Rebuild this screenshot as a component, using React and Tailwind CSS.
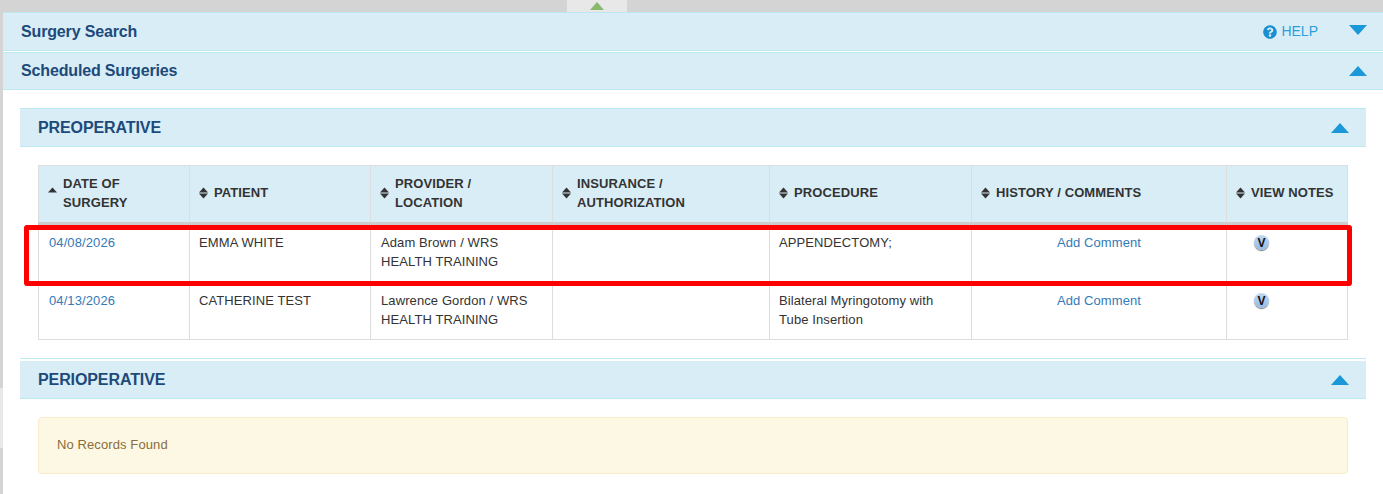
import { FaQuestionCircle } from "react-icons/fa";

function Caret({ down, className }) {
  return (
    <svg width="18" height="10" viewBox="0 0 18 10" className={className}>
      <path d={down ? "M0 0H18L9 10Z" : "M9 0L18 10H0Z"} fill="#1a98d8" />
    </svg>
  );
}

function SortIcon({ asc }) {
  return (
    <svg width="9" height="12" viewBox="0 0 9 12" className="shrink-0">
      <path d="M4.5 0.5L9 5.5H0Z" fill="#333" />
      {!asc && <path d="M4.5 11.5L0 6.5H9Z" fill="#333" />}
    </svg>
  );
}

function Bar({ title, children, short }) {
  return (
    <div className={`flex items-center justify-between bg-[#d9edf7] border-y border-[#bce8f1] pl-[18px] pr-[16px] ${short ? "h-[38px]" : "h-[39px]"}`}>
      <span className="text-[16px] font-bold text-[#1c4a7a] tracking-[-0.15px]">{title}</span>
      {children}
    </div>
  );
}

function SubBar({ title, short }) {
  return (
    <div className={`flex items-center justify-between bg-[#d9edf7] border-b border-[#bce8f1] pl-[18px] pr-[17px] ${short ? "h-[38px]" : "h-[39px] border-t"}`}>
      <span className="text-[16px] font-bold text-[#1c4a7a] tracking-[-0.1px]">{title}</span>
      <Caret />
    </div>
  );
}

const columns = [
  { label: "DATE OF SURGERY", width: "w-[151px]", asc: true },
  { label: "PATIENT", width: "w-[181px]" },
  { label: "PROVIDER / LOCATION", width: "w-[182px]", labelWidth: "max-w-[100px]" },
  { label: "INSURANCE / AUTHORIZATION", width: "w-[217px]" },
  { label: "PROCEDURE", width: "w-[202px]" },
  { label: "HISTORY / COMMENTS", width: "w-[255px]" },
  { label: "VIEW NOTES", width: "w-[121px]" },
];

const rows = [
  {
    date: "04/08/2026",
    patient: "EMMA WHITE",
    provider: "Adam Brown / WRS HEALTH TRAINING",
    procedure: "APPENDECTOMY;",
    height: "h-[59px]",
  },
  {
    date: "04/13/2026",
    patient: "CATHERINE TEST",
    provider: "Lawrence Gordon / WRS HEALTH TRAINING",
    procedure: "Bilateral Myringotomy with Tube Insertion",
    height: "h-[57px]",
  },
];

function VBadge() {
  return (
    <span className="flex items-center justify-center w-[15px] h-[15px] rounded-full bg-gradient-to-b from-[#c3d9f0] to-[#94bae4] shadow-[0_1px_1px_#777] text-[12px] font-bold leading-none text-[#111]">
      V
    </span>
  );
}

export default function App() {
  return (
    <div className="relative h-[494px] overflow-hidden bg-[#d4d4d4] pt-[12px] pl-[3px] font-['Liberation_Sans',Arial,sans-serif]">
      <div className="absolute top-0 left-[567px] w-[60px] h-[12px] bg-[#e8e8e8] flex justify-center items-start pt-[2px]">
        <svg width="14" height="8" viewBox="0 0 14 8">
          <path d="M7 0L14 8H0Z" fill="#8ab86c" />
        </svg>
      </div>
      <div className="absolute left-0 top-[388px] w-[3px] h-[60px] bg-[#e8e8e8]" />

      <div className="bg-white h-full">
        <Bar title="Surgery Search">
          <div className="flex items-center">
            <FaQuestionCircle className="text-[#1a8fd0] text-[14px] mr-[4px]" />
            <span className="text-[14px] text-[#2a9fdb] mr-[31px]">HELP</span>
            <Caret down className="mb-[3px]" />
          </div>
        </Bar>
        <div className="mt-[1px]">
          <Bar title="Scheduled Surgeries" short>
            <Caret />
          </Bar>
        </div>

        <div className="mx-[17px] mt-[18px]">
          <SubBar title="PREOPERATIVE" />
          <div className="mx-[18px] mt-[18px]">
            <table className="table-fixed border-collapse w-[1310px] text-[13px] leading-[19px] tracking-[0.1px] text-[#333]">
              <thead>
                <tr className="h-[58px] bg-[#d9edf7]">
                  {columns.map((col) => (
                    <th
                      key={col.label}
                      className={`${col.width} border border-[#ddd] border-b-[3px] border-b-[#ccc] pl-[9px] pr-[4px] pb-[3px] text-left font-bold text-[13px] text-[#333]`}
                    >
                      <div className="flex items-center gap-[6px]">
                        <SortIcon asc={col.asc} />
                        <span className={col.labelWidth}>{col.label}</span>
                      </div>
                    </th>
                  ))}
                </tr>
              </thead>
              <tbody>
                {rows.map((row) => (
                  <tr key={row.date} className={`${row.height} align-top`}>
                    <td className="border border-[#ddd] px-[10px] pt-[8px]">
                      <a className="text-[#337ab7]">{row.date}</a>
                    </td>
                    <td className="border border-[#ddd] pl-[9px] pr-[10px] pt-[8px]">{row.patient}</td>
                    <td className="border border-[#ddd] px-[10px] pt-[8px]">{row.provider}</td>
                    <td className="border border-[#ddd] px-[10px] pt-[8px]"></td>
                    <td className="border border-[#ddd] pl-[9px] pr-[10px] pt-[8px]">{row.procedure}</td>
                    <td className="border border-[#ddd] px-[10px] pt-[8px] text-center">
                      <a className="text-[#337ab7]">Add Comment</a>
                    </td>
                    <td className="border border-[#ddd] pl-[27px] pt-[10px]">
                      <VBadge />
                    </td>
                  </tr>
                ))}
              </tbody>
            </table>
          </div>

          <div className="mt-[18px] border-t border-[#bce8f1] pt-[2px]">
            <SubBar title="PERIOPERATIVE" short />
          </div>
          <div className="mx-[18px] mt-[18px] h-[57px] flex items-center px-[18px] pb-[2px] bg-[#fcf8e3] border border-[#faebcc] rounded text-[13px] tracking-[0.1px] text-[#8a6d3b]">
            No Records Found
          </div>
        </div>
      </div>

      <div className="absolute left-[24px] top-[225px] w-[1328px] h-[61px] border-[5px] border-[#ff0000] rounded-[3px]" />
    </div>
  );
}
